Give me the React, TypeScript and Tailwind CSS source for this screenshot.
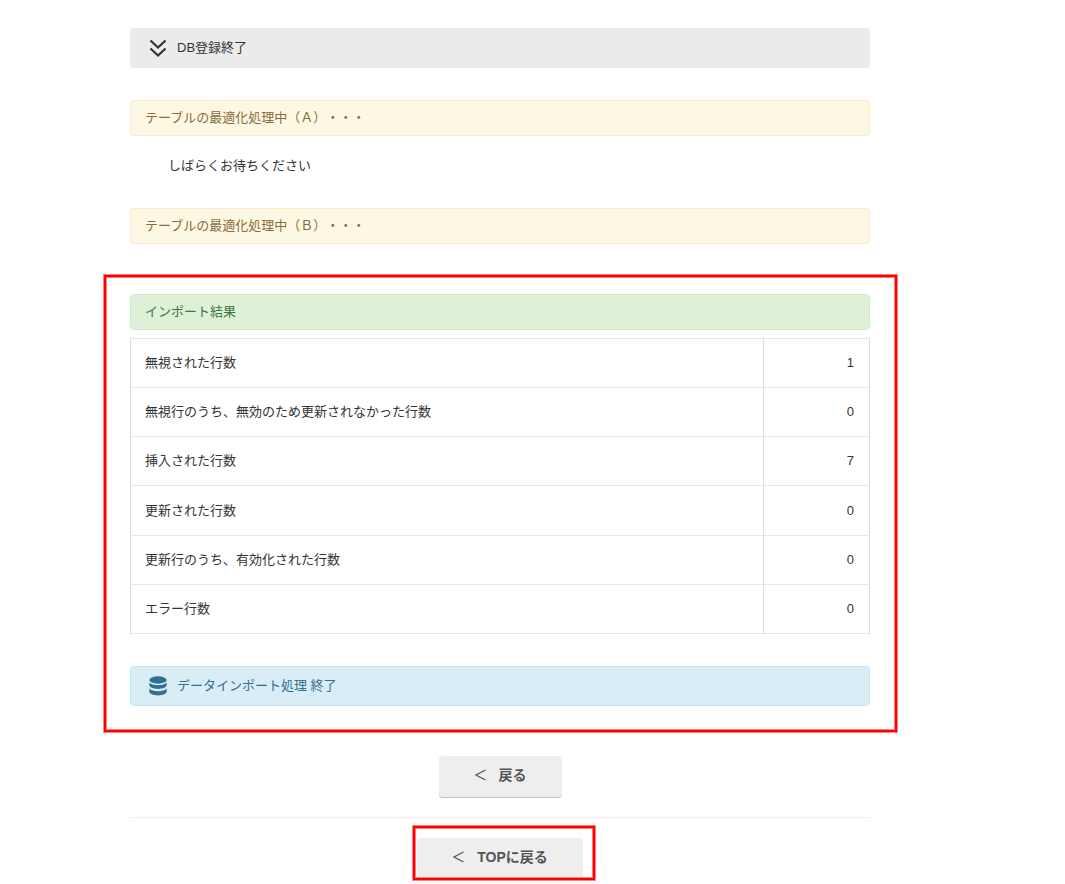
const results: { label: string; count: number }[] = [
  { label: "無視された行数", count: 1 },
  { label: "無視行のうち、無効のため更新されなかった行数", count: 0 },
  { label: "挿入された行数", count: 7 },
  { label: "更新された行数", count: 0 },
  { label: "更新行のうち、有効化された行数", count: 0 },
  { label: "エラー行数", count: 0 },
];

const frame =
  "absolute border-2 border-[#ff0000] pointer-events-none shadow-[0_0_0_1px_#ff8080,inset_0_0_0_1px_#ff8080]";

const BackButton = ({ label }: { label: string }) => {
  return (
    <button
      type="button"
      className="inline-flex h-[42px] items-center gap-[13px] rounded bg-[#eeeeee] px-[35px] pb-1 text-[14px] font-bold text-[#555555] shadow-[inset_0_-1px_0_#c4c4c4] cursor-pointer"
    >
      <svg className="h-3 w-3" viewBox="0 0 12 12" fill="none" aria-hidden="true">
        <path d="M11.500 1 2 6l9.500 5" stroke="currentColor" strokeWidth="1.300" />
      </svg>
      {label}
    </button>
  );
};

const App = () => {
  return (
    <main className="bg-white pt-7 pb-1 pl-[130px] pr-[195px] font-['Liberation_Sans','Noto_Sans_CJK_JP',sans-serif] text-[13px] leading-5 text-[#333333] [text-spacing-trim:space-all]">
      <div className="mb-8 flex h-10 items-center gap-[9px] rounded bg-[#ebebeb] pl-[18px]">
        <svg className="h-5 w-5" viewBox="0 0 20 20" fill="none" aria-hidden="true">
          <path
            d="m2.500 2.500 7.500 7 7.500-7M2.500 10.500l7.500 7 7.500-7"
            stroke="currentColor"
            strokeWidth="2.200"
          />
        </svg>
        <span>DB登録終了</span>
      </div>

      <div className="flex h-9 items-center rounded border border-[#faebcc] bg-[#fcf8e3] px-3.5 text-[#8a6d3b]">
        テーブルの最適化処理中（Ａ）・・・
      </div>
      <p className="mt-5 mb-8 pl-[38px]">しばらくお待ちください</p>
      <div className="flex h-9 items-center rounded border border-[#faebcc] bg-[#fcf8e3] px-3.5 text-[#8a6d3b]">
        テーブルの最適化処理中（Ｂ）・・・
      </div>

      <section className="relative mt-[50px]">
        <h2 className="mb-2 flex h-9 items-center rounded border border-[#d0e9c6] bg-[#dff0d8] px-3.5 text-[#3c763d]">
          インポート結果
        </h2>
        <table className="h-74 w-full border-collapse">
          <tbody>
            {results.map((row) => (
              <tr key={row.label} className="border-y border-[#e8e8e8]">
                <th scope="row" className="border-x border-[#dddddd] px-3.5 text-left font-normal">
                  {row.label}
                </th>
                <td className="w-[106px] border-x border-[#dddddd] px-[15px] text-right">
                  {row.count}
                </td>
              </tr>
            ))}
          </tbody>
        </table>
        <div className="mt-8 flex h-10 items-center gap-[9px] rounded border border-[#bce8f1] bg-[#d9edf7] pl-[17px] text-[#31708f]">
          <svg className="h-5 w-5" viewBox="0 0 20 20" fill="currentColor" aria-hidden="true">
            <ellipse cx="10" cy="4" rx="8.700" ry="3.700" />
            <path d="M1.300 6.600c1.500 2 5 2.600 8.700 2.600s7.200-.6 8.700-2.600v2.400c0 2.200-3.900 3.900-8.700 3.900s-8.700-1.700-8.700-3.900z" />
            <path d="M1.300 12.600c1.500 2 5 2.600 8.700 2.600s7.200-.6 8.700-2.600v3c0 2.200-3.900 3.900-8.700 3.900s-8.700-1.700-8.700-3.900z" />
          </svg>
          <span>データインポート処理 終了</span>
        </div>
        <div className={`${frame} -top-[19px] -bottom-[26px] -left-[26px] -right-[27px]`} />
      </section>

      <div className="mt-[50px] flex justify-center">
        <BackButton label="戻る" />
      </div>
      <hr className="mt-[19px] mb-5 border-[#eeeeee]" />
      <div className="flex justify-center">
        <div className="relative flex">
          <BackButton label="TOPに戻る" />
          <div className={`${frame} -top-3 bottom-0 -left-1 -right-3`} />
        </div>
      </div>
    </main>
  );
};

export default App;
